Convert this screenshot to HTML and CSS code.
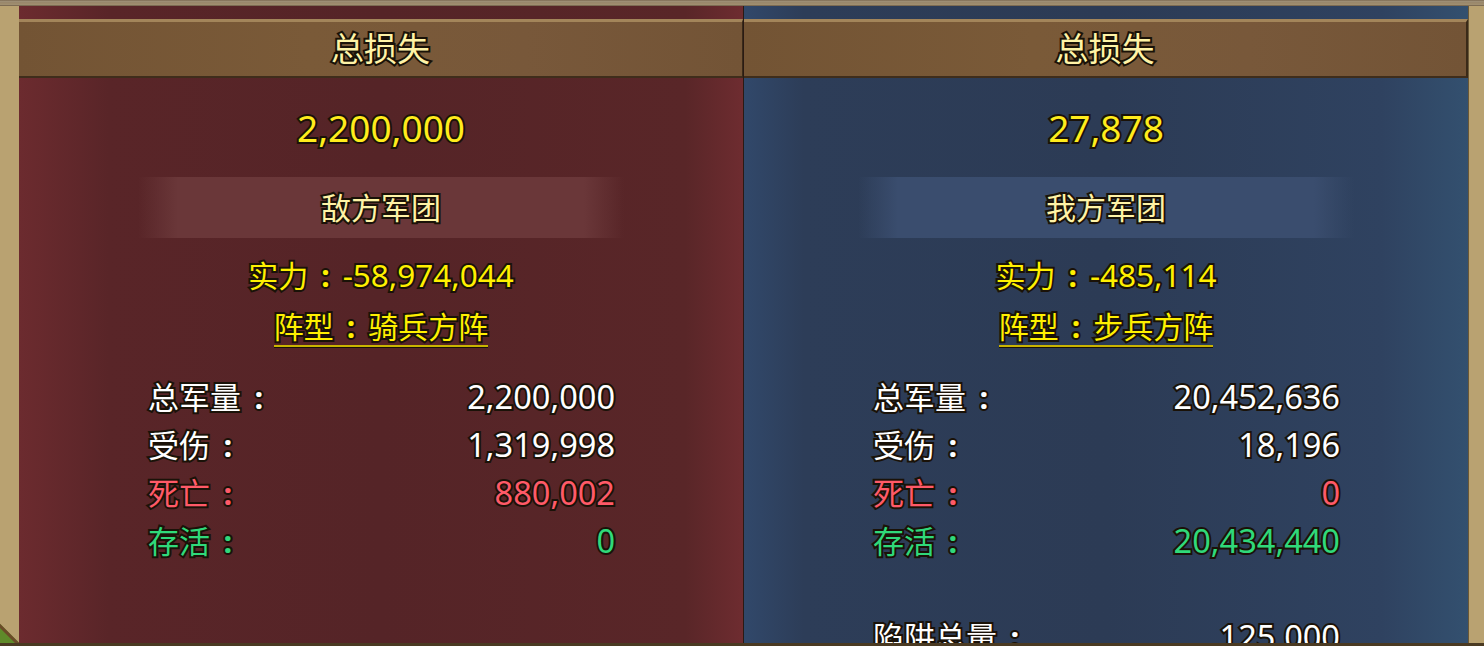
FILE: index.html
```html
<!DOCTYPE html>
<html lang="zh-CN">
<head>
  <meta charset="UTF-8">
  <title>战报</title>
  <link rel="stylesheet" href="styles.css">
</head>
<body>

  <div class="rail"></div>

  <div class="board">
    <div class="edge edge-left"><div class="grass"></div></div>

    <div class="panel enemy">
      <div class="title">总损失</div>
      <div class="loss">2,200,000</div>
      <div class="banner">敌方军团</div>
      <div class="power">实力<span class="colon">:</span><span class="num">-58,974,044</span></div>
      <div class="formation">阵型<span class="colon">:</span>骑兵方阵</div>
      <div class="stats">
        <div class="row"><span>总军量<span class="colon">:</span></span><span class="num">2,200,000</span></div>
        <div class="row"><span>受伤<span class="colon">:</span></span><span class="num">1,319,998</span></div>
        <div class="row dead"><span>死亡<span class="colon">:</span></span><span class="num">880,002</span></div>
        <div class="row alive"><span>存活<span class="colon">:</span></span><span class="num">0</span></div>
      </div>
    </div>

    <div class="panel ally">
      <div class="title">总损失</div>
      <div class="loss">27,878</div>
      <div class="banner">我方军团</div>
      <div class="power">实力<span class="colon">:</span><span class="num">-485,114</span></div>
      <div class="formation">阵型<span class="colon">:</span>步兵方阵</div>
      <div class="stats">
        <div class="row"><span>总军量<span class="colon">:</span></span><span class="num">20,452,636</span></div>
        <div class="row"><span>受伤<span class="colon">:</span></span><span class="num">18,196</span></div>
        <div class="row dead"><span>死亡<span class="colon">:</span></span><span class="num">0</span></div>
        <div class="row alive"><span>存活<span class="colon">:</span></span><span class="num">20,434,440</span></div>
        <div class="row gap"></div>
        <div class="row"><span>陷阱总量<span class="colon">:</span></span><span class="num">125,000</span></div>
      </div>
    </div>

    <div class="edge edge-right"></div>
  </div>

  <div class="rail rail-bottom"></div>

</body>
</html>
```

FILE: styles.css
```css
body {
  margin: 0;
  height: 646px;
  overflow: hidden;
  background: #b9a271;
  font-family: "Noto Sans", "Noto Sans CJK SC", sans-serif;
}

/* 上下的木条 */
.rail {
  height: 6px;
  background: linear-gradient(#7d6a52 0, #a89a80 2px, #8a7558 3px, #b0a080 4px, #6c5a44 6px);
}

.rail-bottom {
  height: 3px;
  background: #4a3a22;
}

.board {
  display: flex;
  height: 637px;
}

.edge {
  background: #b9a271;
  position: relative;
  overflow: hidden;
}

.edge-left {
  width: 19px;
}

.edge-right {
  width: 15px;
  border-left: 1px solid #6a5838;
}

/* 左下角的草地 */
.grass {
  position: absolute;
  left: -16px;
  bottom: -16px;
  width: 24px;
  height: 24px;
  background: #5f8a2a;
  border: 3px solid #6b4a28;
  transform: rotate(45deg);
}

.panel {
  flex: 1;
  overflow: hidden;
  display: flex;
  flex-direction: column;
  align-items: center;
}

.enemy {
  background: linear-gradient(90deg, #6c2b2f 0, #592528 90px, #552427 50%, #592628 92%, #6e2c30 100%);
  border-right: 1px solid #2a1a14;
}

.ally {
  background: linear-gradient(90deg, #31486a 0, #2d3d58 60px, #2c3b55 50%, #2f4260 88%, #33506f 100%);
}

/* 描边字 */
.title,
.loss,
.power,
.formation,
.banner,
.row {
  -webkit-text-stroke: 4px #1a1208;
  paint-order: stroke fill;
}

/* 冒号占一个字宽并居中 */
.colon {
  display: inline-block;
  width: 1.15em;
  text-align: center;
  font-weight: bold;
}

/* 数字比汉字略大 */
.num {
  font-size: 1.05em;
}

/* 标题木板 */
.title {
  align-self: stretch;
  margin-top: 13px;
  height: 54px;
  line-height: 54px;
  text-align: center;
  font-size: 33px;
  color: #fff3a6;
  background: linear-gradient(90deg, #735434 0, #7a5a38 40%, #78583a 70%, #735436 100%);
  border-top: 3px solid #a3855a;
  border-bottom: 2px solid #3f2d1b;
}

.enemy .title {
  border-right: 1px solid #3a2a18;
}

.ally .title {
  border-right: 2px solid #3a2a18;
}

.loss {
  margin-top: 28px;
  height: 44px;
  line-height: 44px;
  font-size: 37px;
  color: #ffec1c;
}

.banner {
  margin-top: 27px;
  width: 486px;
  height: 61px;
  line-height: 61px;
  text-align: center;
  font-size: 30px;
  color: #fff3a6;
}

.enemy .banner {
  background: linear-gradient(90deg, rgba(106, 55, 57, 0) 0, #6a3739 40px, #6a3739 446px, rgba(106, 55, 57, 0) 100%);
}

.ally .banner {
  width: 496px;
  background: linear-gradient(90deg, rgba(58, 77, 110, 0) 0, #3a4d6e 40px, #3a4d6e 456px, rgba(58, 77, 110, 0) 100%);
}

.power {
  margin-top: 17px;
  height: 40px;
  line-height: 40px;
  font-size: 30px;
  color: #fff000;
}

.formation {
  margin-top: 14px;
  height: 36px;
  line-height: 36px;
  font-size: 30px;
  color: #fff000;
  border-bottom: 2px solid #c9b400;
  box-shadow: 0 1px 0 #1a1208;
}

.stats {
  align-self: stretch;
  margin-top: 26px;
  padding: 0 128px 0 129px;
}

.row {
  display: flex;
  justify-content: space-between;
  height: 48px;
  line-height: 48px;
  font-size: 31px;
  color: #ffffff;
}

.row.dead {
  color: #ff5a68;
}

.row.alive {
  color: #30d97a;
}
```
